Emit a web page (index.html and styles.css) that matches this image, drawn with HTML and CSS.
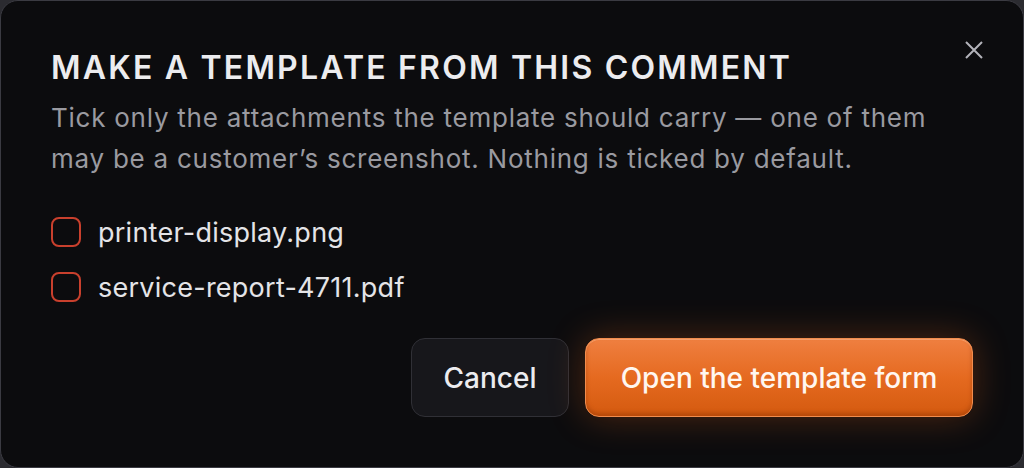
FILE: index.html
```html
<!DOCTYPE html>
<html lang="en">
<head>
<meta charset="utf-8">
<link rel="stylesheet" href="styles.css">
<title>Make a template</title>
</head>
<body>
<div class="dialog" role="dialog" aria-labelledby="dlg-title">
  <button class="close" aria-label="Close">
    <svg width="18" height="18" viewBox="0 0 18 18" fill="none" stroke="currentColor" stroke-width="2"><path d="M1 1 L17 17 M17 1 L1 17"/></svg>
  </button>
  <h1 id="dlg-title" class="title">MAKE A TEMPLATE FROM THIS COMMENT</h1>
  <p class="desc">Tick only the attachments the template should carry — one of them may be a customer’s screenshot. Nothing is ticked by default.</p>
  <ul class="files">
    <li class="file"><span class="box"></span><span class="name">printer-display.png</span></li>
    <li class="file"><span class="box"></span><span class="name">service-report-4711.pdf</span></li>
  </ul>
  <div class="actions">
    <button class="btn btn-secondary">Cancel</button>
    <button class="btn btn-primary">Open the template form</button>
  </div>
</div>
</body>
</html>
```
FILE: styles.css
```css
* { box-sizing: border-box; }
html, body { margin: 0; padding: 0; }
body {
  background: #2b2b30;
  width: 1024px;
  height: 468px;
  font-family: Inter, "Liberation Sans", sans-serif;
}
.dialog {
  position: relative;
  width: 1024px;
  height: 468px;
  background: #0c0c0e;
  border: 1px solid #3b3b42;
  border-radius: 18px;
  padding: 45px 50px 0 50px;
  display: flex;
  flex-direction: column;
}
.close {
  position: absolute;
  top: 40px;
  right: 40px;
  width: 18px;
  height: 18px;
  padding: 0;
  border: 0;
  background: none;
  color: #b4b4ba;
  display: flex;
}
.title {
  margin: 0;
  font-size: 32px;
  font-weight: 600;
  line-height: 44px;
  color: #ececef;
  letter-spacing: 2.2px;
  white-space: nowrap;
}
.desc {
  margin: 7px 0 0 0;
  font-size: 26px;
  line-height: 41px;
  color: #9a9aa0;
  letter-spacing: 0.75px;
  max-width: 905px;
}
.files {
  list-style: none;
  margin: 38px 0 0 0;
  padding: 0;
  display: flex;
  flex-direction: column;
  gap: 25px;
}
.file {
  display: flex;
  align-items: center;
  gap: 17px;
  height: 30px;
}
.box {
  width: 30px;
  height: 30px;
  border: 2px solid #c9402d;
  border-radius: 8px;
  flex: none;
}
.name {
  font-size: 27px;
  letter-spacing: 0.25px;
  color: #e4e4e7;
}
.actions {
  margin-top: 36px;
  display: flex;
  justify-content: flex-end;
  gap: 16px;
}
.btn {
  height: 79px;
  border-radius: 14px;
  font-family: Inter, "Liberation Sans", sans-serif;
  font-size: 28px;
  font-weight: 500;
  padding: 0;
  cursor: pointer;
}
.btn-secondary {
  width: 158px;
  background: #17171b;
  border: 1px solid #303036;
  color: #ececef;
}
.btn-primary {
  width: 388px;
  background: linear-gradient(180deg, #ef7f40 0%, #e56a20 50%, #d45a0f 100%);
  border: 1px solid #f28c4d;
  color: #fff7f0;
  box-shadow: 0 0 36px rgba(234, 104, 28, 0.3), inset 0 1px 0 rgba(255, 200, 160, 0.45), inset 0 -3px 4px rgba(120, 40, 0, 0.35);
}
```
